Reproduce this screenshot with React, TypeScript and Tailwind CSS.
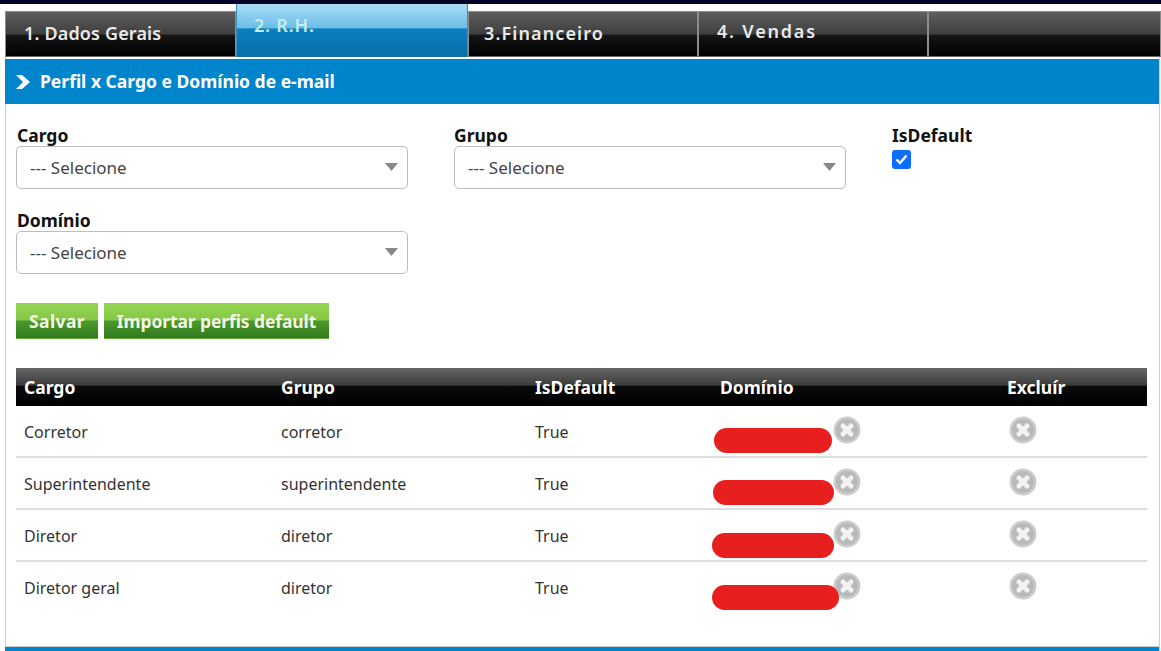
const font = "font-['Noto_Sans','Liberation_Sans',sans-serif]";

const tabs = [
  { label: "1. Dados Gerais", width: "w-[231px]", textClass: "pl-[18px] pt-[9px] tracking-[0.15px]" },
  { label: "2. R.H.", width: "w-[232px]", active: true, textClass: "" },
  { label: "3.Financeiro", width: "w-[230px]", textClass: "pl-[15px] pt-[9px] tracking-[1.1px]" },
  { label: "4. Vendas", width: "w-[230px]", textClass: "pl-[18px] pt-[7px] tracking-[1.8px]" },
  { label: "", width: "flex-1", textClass: "" },
];

const buttons = [
  { label: "Salvar", width: "w-[82px] tracking-[0.4px]" },
  { label: "Importar perfis default", width: "w-[225px] tracking-[-0.1px]" },
];

const rows = [
  { cargo: "Corretor", grupo: "corretor", mark: "left-[-6px] top-[22px] w-[118px] h-[25px]" },
  { cargo: "Superintendente", grupo: "superintendente", mark: "left-[-7px] top-[22px] w-[121px] h-[25px]" },
  { cargo: "Diretor", grupo: "diretor", mark: "left-[-8px] top-[23px] w-[122px] h-[25px]" },
  { cargo: "Diretor geral", grupo: "diretor", mark: "left-[-8px] top-[23px] w-[127px] h-[25px]" },
];

function DeleteIcon() {
  return (
    <svg width="28" height="28" viewBox="0 0 28 28">
      <circle cx="14" cy="14" r="13.5" fill="#cccccc" />
      <circle cx="14" cy="14" r="11" fill="#b9b9b9" />
      <path d="M10 10l8 8M18 10l-8 8" stroke="#f2f2f2" strokeWidth="5" strokeLinecap="round" />
    </svg>
  );
}

function FakeSelect() {
  return (
    <div className="w-[392px] h-[43px] flex items-center justify-between border border-[#bdbdbd] rounded-[5px] bg-white pl-[13px] pr-[9px] text-[17px] text-[#444444]">
      <span className="pt-[1px]">--- Selecione</span>
      <svg width="13" height="8" viewBox="0 0 13 8" className="mb-[2px]">
        <path d="M0 0h13L6.5 8z" fill="#888888" />
      </svg>
    </div>
  );
}

function Field({ label, labelClass = "" }: { label: string; labelClass?: string }) {
  return (
    <div>
      <div className={`text-[17.5px] leading-[21px] font-bold text-[#111111] ${labelClass}`}>{label}</div>
      <FakeSelect />
    </div>
  );
}

export default function App() {
  return (
    <div className={`${font} w-[1161px] h-[651px] overflow-hidden bg-white flex flex-col`}>
      <div className="h-[4px] shrink-0 bg-[#03032a]" />

      {/* tabs */}
      <div className="h-[53px] shrink-0 pl-[5px] flex items-end">
        {tabs.map((tab) =>
          tab.active ? (
            <div
              key={tab.label}
              className={`${tab.width} h-[53px] bg-[linear-gradient(#a9dcf5_0%,#6cbde8_45%,#0a7fc0_47%,#0b6ea8_100%)] border-x border-[#3f8fbd] text-[#c4ecea] text-[18px] font-semibold pl-[17px] pt-[9px] leading-[24px] tracking-[0.8px]`}
            >
              {tab.label}
            </div>
          ) : (
            <div
              key={tab.label || "empty"}
              className={`${tab.width} h-[46px] border border-[#8c8c8c] border-b-[#666666] bg-[linear-gradient(#5e5e5e_0%,#3e3e3e_50%,#161616_53%,#000000_100%)] text-[#e9e9e9] text-[18px] font-semibold leading-[24px] ${tab.textClass}`}
            >
              {tab.label}
            </div>
          )
        )}
      </div>

      <div className="flex-1 ml-[5px] mr-[1px] border-x border-[#cfcfcf] flex flex-col">
        {/* section title */}
        <div className="-ml-[1px] mt-[2px] h-[45px] shrink-0 bg-[#0085cc] flex items-center pl-[10px] gap-[9px] text-white text-[17.5px] font-bold">
          <svg width="16" height="16" viewBox="0 0 16 16">
            <path d="M1 1h6l8 7-8 7H1l7-7z" fill="#ffffff" />
          </svg>
          Perfil x Cargo e Domínio de e-mail
        </div>

        <div className="flex-1 pl-[10px] pr-[13px] pt-[21px]">
          {/* form */}
          <div className="flex">
            <div className="w-[438px]">
              <Field label="Cargo" labelClass="pl-[1px]" />
            </div>
            <div className="w-[438px]">
              <Field label="Grupo" />
            </div>
            <div>
              <div className="text-[17.5px] leading-[21px] font-bold text-[#111111]">IsDefault</div>
              <div className="w-[19px] h-[19px] mt-[4px] rounded-[3px] bg-[#0d6efd] flex items-center justify-center">
                <svg width="13" height="11" viewBox="0 0 13 11">
                  <path d="M1.5 5.5l3.5 3.5 6.5-7.5" fill="none" stroke="#ffffff" strokeWidth="2.4" />
                </svg>
              </div>
            </div>
          </div>
          <div className="mt-[21px]">
            <Field label="Domínio" labelClass="pl-[1px]" />
          </div>

          {/* buttons */}
          <div className="mt-[29px] flex gap-[6px]">
            {buttons.map((btn) => (
              <div
                key={btn.label}
                className={`${btn.width} h-[36px] pt-[1px] flex items-center justify-center bg-[linear-gradient(#95d552_0%,#85c846_48%,#4c9a2a_52%,#2f7a1e_100%)] text-[#f3f7e6] text-[17.5px] font-bold border-b border-[#6bad3d]`}
              >
                {btn.label}
              </div>
            ))}
          </div>

          {/* table */}
          <table className="mt-[29px] w-[1131px] table-fixed border-collapse text-[16px] text-[#333333]">
            <thead>
              <tr className="h-[38px] bg-[linear-gradient(#666666_0%,#3c3c3c_45%,#0a0a0a_48%,#000000_100%)] text-white text-[17.5px]">
                <th className="w-[257px] pl-[8px] text-left font-bold">Cargo</th>
                <th className="w-[254px] pl-[8px] text-left font-bold">Grupo</th>
                <th className="w-[185px] pl-[8px] text-left font-bold">IsDefault</th>
                <th className="w-[287px] pl-[8px] text-left font-bold">Domínio</th>
                <th className="pl-[8px] text-left font-bold">Excluír</th>
              </tr>
            </thead>
            <tbody>
              {rows.map((row, i) => (
                <tr key={row.cargo} className={i < 3 ? "border-b-2 border-[#dddddd]" : ""}>
                  <td className="pl-[8px] pt-[1px]">{row.cargo}</td>
                  <td className="pl-[8px] pt-[1px]">{row.grupo}</td>
                  <td className="pl-[8px] pt-[1px]">True</td>
                  <td className="pl-[8px]">
                    <div className="relative h-[50px]">
                      <div className="absolute top-[10px] left-[113px]">
                        <DeleteIcon />
                      </div>
                      <div className={`absolute ${row.mark} rounded-full bg-[#e81f1f]`} />
                    </div>
                  </td>
                  <td className="pl-[1px]">
                    <div className="relative h-[50px]">
                      <div className="absolute top-[10px] left-[9px]">
                        <DeleteIcon />
                      </div>
                    </div>
                  </td>
                </tr>
              ))}
            </tbody>
          </table>
        </div>

        <div className="-ml-[1px] h-[5px] shrink-0 bg-[#0085cc] border-t border-[#cfcfcf]" />
      </div>
    </div>
  );
}
